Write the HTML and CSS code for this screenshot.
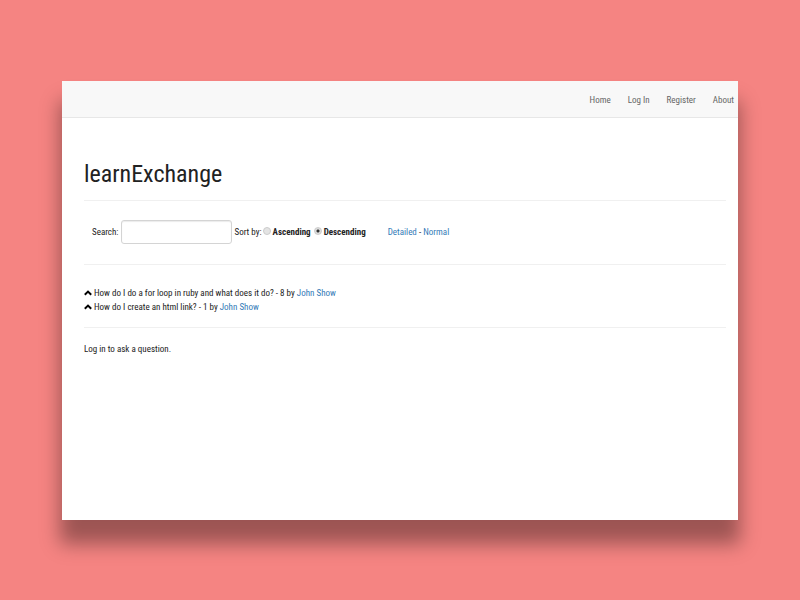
FILE: index.html
```html
<!DOCTYPE html>
<html lang="en">
<head>
<meta charset="utf-8">
<title>learnExchange</title>
<link rel="stylesheet" href="styles.css">
</head>
<body>
<div class="window">
  <nav class="navbar">
    <a href="#">Home</a>
    <a href="#">Log In</a>
    <a href="#">Register</a>
    <a href="#">About</a>
  </nav>
  <main class="content">
    <h1>learnExchange</h1>
    <form class="filters">
      <label for="search">Search:</label>
      <input class="search" id="search" type="text">
      <span class="sort">Sort by:</span>
      <input class="radio" type="radio" name="sort" id="asc">
      <label class="choice" for="asc">Ascending</label>
      <input class="radio" type="radio" name="sort" id="desc" checked>
      <label class="choice" for="desc">Descending</label>
      <span class="views"><a href="#">Detailed</a> - <a href="#">Normal</a></span>
    </form>
    <ul class="questions">
      <li><button class="vote" type="button" aria-label="Vote up"><svg viewBox="0 0 8 6"><path d="M0.8 4.8 4 1.6 7.2 4.8"/></svg></button>How do I do a for loop in ruby and what does it do? - 8 by <a href="#">John Show</a></li>
      <li><button class="vote" type="button" aria-label="Vote up"><svg viewBox="0 0 8 6"><path d="M0.8 4.8 4 1.6 7.2 4.8"/></svg></button>How do I create an html link? - 1 by <a href="#">John Show</a></li>
    </ul>
    <p>Log in to ask a question.</p>
  </main>
</div>
</body>
</html>
```
FILE: styles.css
```css
* {
  box-sizing: border-box;
}

body {
  display: flex;
  min-height: 100vh;
  margin: 0;
  padding: 81px 62px 80px;
  background: #f58482;
  color: #222;
  font-family: "Roboto Condensed", "Arial Narrow", "Liberation Sans", sans-serif;
  font-size: 9px;
  line-height: 14px;
}

a {
  color: #337ab7;
  text-decoration: none;
}

.window {
  flex: 1;
  background: #fff;
  box-shadow: 0 22px 18px 2px rgba(0, 0, 0, 0.36);
}

.navbar {
  display: flex;
  justify-content: flex-end;
  gap: 17px;
  padding: 12px 4px 10px;
  background: #f8f8f8;
  border-bottom: 1px solid #e7e7e7;
}

.navbar a {
  color: #666;
}

.content {
  padding: 41px 12px 0 22px;
}

h1 {
  margin: 0;
  padding-bottom: 11px;
  border-bottom: 1px solid #f0f0f0;
  color: #222;
  font-size: 24px;
  font-weight: 400;
  line-height: 30px;
}

.filters {
  display: flex;
  align-items: center;
  padding: 19px 8px 20px;
  border-bottom: 1px solid #f0f0f0;
}

.search {
  width: 111px;
  height: 24px;
  margin: 0 2px 0 3px;
  border: 1px solid #d4d4d4;
  border-radius: 3px;
  background: #fff;
  font: inherit;
  box-shadow: inset 0 1px 1px rgba(0, 0, 0, 0.08);
}

.radio {
  appearance: none;
  width: 8px;
  height: 8px;
  margin: 0 2px 3px 1px;
  border: 1px solid #ccc;
  border-radius: 50%;
  background: #e4e4e4;
}

.radio:checked {
  margin-left: 3px;
  background: radial-gradient(#333 0 1px, #ddd 2px);
}

.choice {
  font-weight: 700;
}

.views {
  margin-left: 22px;
}

.questions {
  margin: 0;
  padding: 21px 0 13px;
  border-bottom: 1px solid #f0f0f0;
  list-style: none;
}

.questions li {
  display: flex;
  white-space: pre;
}

.vote {
  display: flex;
  align-items: center;
  margin: 0 2px 0 0;
  padding: 0;
  border: 0;
  background: none;
}

.vote svg {
  width: 8px;
  height: 6px;
  fill: none;
  stroke: #000;
  stroke-width: 2;
}

p {
  margin: 14px 0 0;
}
```
